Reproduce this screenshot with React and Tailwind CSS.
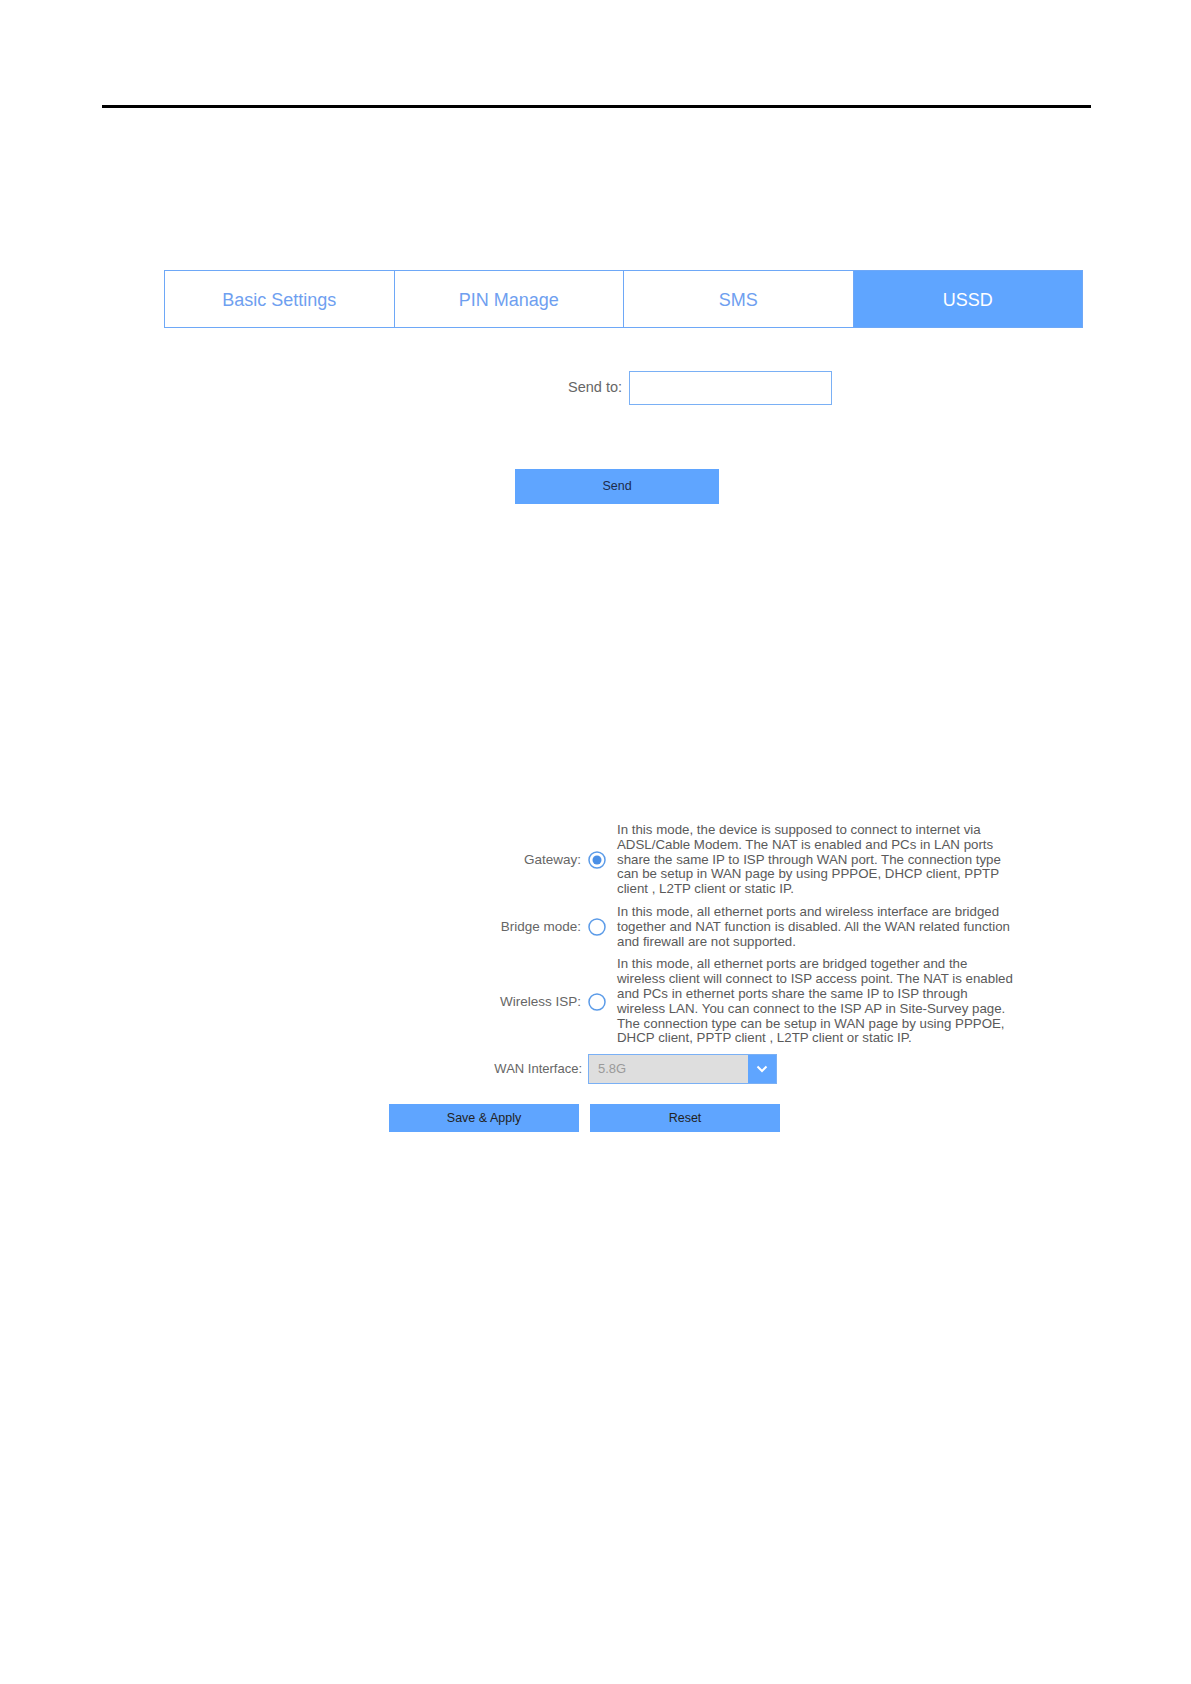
import { useState } from "react";

const tabs = ["Basic Settings", "PIN Manage", "SMS", "USSD"];

const modes = [
  {
    key: "gateway",
    label: "Gateway:",
    lines: [
      "In this mode, the device is supposed to connect to internet via",
      "ADSL/Cable Modem. The NAT is enabled and PCs in LAN ports",
      "share the same IP to ISP through WAN port. The connection type",
      "can be setup in WAN page by using PPPOE, DHCP client, PPTP",
      "client , L2TP client or static IP.",
    ],
  },
  {
    key: "bridge",
    label: "Bridge mode:",
    lines: [
      "In this mode, all ethernet ports and wireless interface are bridged",
      "together and NAT function is disabled. All the WAN related function",
      "and firewall are not supported.",
    ],
  },
  {
    key: "wisp",
    label: "Wireless ISP:",
    lines: [
      "In this mode, all ethernet ports are bridged together and the",
      "wireless client will connect to ISP access point. The NAT is enabled",
      "and PCs in ethernet ports share the same IP to ISP through",
      "wireless LAN. You can connect to the ISP AP in Site-Survey page.",
      "The connection type can be setup in WAN page by using PPPOE,",
      "DHCP client, PPTP client , L2TP client or static IP.",
    ],
  },
];

function Radio({ checked, onClick }) {
  return (
    <svg width="18" height="18" viewBox="0 0 18 18" onClick={onClick} className="cursor-pointer">
      <circle cx="9" cy="9" r="8" fill="white" stroke="#5b9be8" strokeWidth="1.5" />
      {checked && <circle cx="9" cy="9" r="4.5" fill="#4a8fe6" />}
    </svg>
  );
}

export default function App() {
  const [active, setActive] = useState(3);
  const [mode, setMode] = useState("gateway");

  return (
    <div className="w-[1191px] min-h-[1684px] bg-white font-['Liberation_Sans',Arial,sans-serif] text-[#555]">
      {/* top rule */}
      <div className="pt-[105px] pl-[102px]">
        <div className="w-[989px] h-[3px] bg-black" />
      </div>

      {/* tabs */}
      <div className="mt-[162px] ml-[164px] flex w-[919px] h-[58px] border border-[#6ea8f7]">
        {tabs.map((t, i) => (
          <div
            key={t}
            onClick={() => setActive(i)}
            className={
              "flex-1 flex items-center justify-center pt-[3px] text-[18px] cursor-pointer " +
              (i > 0 ? "border-l border-[#6ea8f7] " : "") +
              (i === active ? "bg-[#5fa5ff] text-white" : "bg-white text-[#6f9ff0]")
            }
          >
            {t}
          </div>
        ))}
      </div>

      {/* send to */}
      <div className="mt-[43px] flex items-center">
        <div className="w-[622px] text-right text-[14.5px] text-[#666]">Send to:</div>
        <input className="ml-[7px] w-[203px] h-[34px] border border-[#7ab0f5] outline-none px-2 text-[14px]" />
      </div>
      <div className="mt-[64px] ml-[515px]">
        <button className="w-[204px] h-[35px] bg-[#5fa5ff] text-[12.5px] text-[#1c2b4a]">Send</button>
      </div>

      {/* operation mode */}
      <div className="mt-[319px] flex flex-col gap-[8px]">
        {modes.map((m) => (
          <div key={m.key} className="flex items-center">
            <div className="w-[581px] text-right text-[13.5px] text-[#666]">{m.label}</div>
            <div className="ml-[7px] w-[18px] h-[18px] flex">
              <Radio checked={mode === m.key} onClick={() => setMode(m.key)} />
            </div>
            <div className="ml-[11px] text-[13.3px] leading-[14.8px] text-[#5a5a5a] whitespace-nowrap">
              {m.lines.map((l, i) => (
                <div key={i}>{l}</div>
              ))}
            </div>
          </div>
        ))}

        <div className="flex items-center">
          <div className="w-[582px] text-right text-[13px] text-[#666]">WAN Interface:</div>
          <div className="ml-[6px] w-[189px] h-[30px] flex border border-[#7ab0f5] bg-[#dedede]">
            <div className="flex-1 flex items-center pl-[9px] text-[13px] text-[#9a9a9a]">5.8G</div>
            <div className="w-[28px] h-full bg-[#5fa5ff] flex items-center justify-center">
              <svg width="12" height="8" viewBox="0 0 12 8">
                <polyline points="1.5,1.5 6,6 10.5,1.5" fill="none" stroke="white" strokeWidth="2" />
              </svg>
            </div>
          </div>
        </div>
      </div>

      <div className="mt-[20px] ml-[389px] flex gap-[11px]">
        <button className="w-[190px] h-[28px] bg-[#5fa5ff] text-[12.5px] text-[#222]">Save &amp; Apply</button>
        <button className="w-[190px] h-[28px] bg-[#5fa5ff] text-[12.5px] text-[#222]">Reset</button>
      </div>
    </div>
  );
}
